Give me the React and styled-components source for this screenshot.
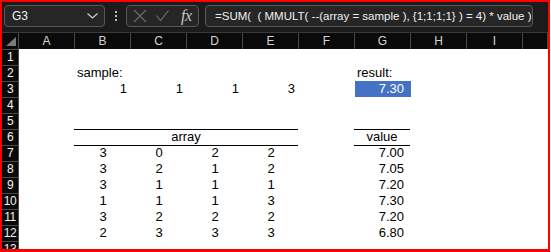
import React from "react";
import styled, { createGlobalStyle } from "styled-components";

const Global = createGlobalStyle`
  html, body { margin: 0; padding: 0; background: #fff; }
  body { font-family: "Liberation Sans", Arial, sans-serif; }
`;

const COLS = ["A", "B", "C", "D", "E", "F", "G", "H", "I", "J"];
const ROWS = 13;

const num = (v) => ({ v, a: "right" });
const mid = (v) => ({ v, a: "center" });
const val = (v) => ({ v, a: "right", pad: 7 });

const cells = {
  B2: { v: "sample:", a: "left" },
  G2: { v: "result:", a: "left" },
  B3: num("1"),
  C3: num("1"),
  D3: num("1"),
  E3: num("3"),
  G3: { v: "7.30", a: "right", pad: 7, fill: true },
  B6: { v: "array", a: "center", span: 4, rule: true },
  G6: { v: "value", a: "center", rule: true },
};

const table = [
  ["3", "0", "2", "2", "7.00"],
  ["3", "2", "1", "2", "7.05"],
  ["3", "1", "1", "1", "7.20"],
  ["1", "1", "1", "3", "7.30"],
  ["3", "2", "2", "2", "7.20"],
  ["2", "3", "3", "3", "6.80"],
];
table.forEach((r, i) => {
  const row = i + 7;
  ["B", "C", "D", "E"].forEach((c, j) => (cells[c + row] = mid(r[j])));
  cells["G" + row] = val(r[4]);
});

export default function App() {
  const body = [];
  for (let r = 1; r <= ROWS; r++) {
    body.push(<RowHead key={"h" + r}>{r}</RowHead>);
    let skip = 0;
    COLS.forEach((c, i) => {
      if (skip > 0) {
        skip--;
        return;
      }
      const cell = cells[c + r];
      const span = (cell && cell.span) || 1;
      skip = span - 1;
      body.push(
        <Cell
          key={c + r}
          $span={span}
          $align={cell ? cell.a : "left"}
          $pad={cell && cell.pad}
          $fill={cell && cell.fill}
          $rule={cell && cell.rule}
        >
          {cell ? cell.v : ""}
        </Cell>
      );
    });
  }

  return (
    <>
      <Global />
      <Frame>
        <TopBar>
          <NameBox>
            <span>G3</span>
            <svg width="11" height="6" viewBox="0 0 11 6">
              <polyline points="0.5,0.5 5.5,5 10.5,0.5" fill="none" stroke="#cfcfcf" strokeWidth="1.2" />
            </svg>
          </NameBox>
          <Dots>
            <i />
            <i />
            <i />
          </Dots>
          <FxBox>
            <svg width="14" height="14" viewBox="0 0 14 14">
              <path d="M1 1 L13 13 M13 1 L1 13" stroke="#6a6a6a" strokeWidth="1.2" />
            </svg>
            <svg width="13" height="12" viewBox="0 0 13 12">
              <polyline points="0.5,5.5 4.5,10.5 12.5,0.5" fill="none" stroke="#6a6a6a" strokeWidth="1.2" />
            </svg>
            <Fx>fx</Fx>
          </FxBox>
          <Formula>=SUM(&nbsp; ( MMULT( --(array = sample ), {"{1;1;1;1}"} ) = 4) * value )</Formula>
        </TopBar>
        <Sheet>
          <Corner>
            <svg width="10" height="9" viewBox="0 0 10 9">
              <polygon points="10,0 10,9 0,9" fill="#7a7a7a" />
            </svg>
          </Corner>
          {COLS.map((c) => (
            <ColHead key={c}>{c === "J" ? "" : c}</ColHead>
          ))}
          {body}
        </Sheet>
      </Frame>
    </>
  );
}

const Frame = styled.div`
  width: 550px;
  height: 252px;
  box-sizing: border-box;
  border: 2px solid #ff0000;
  border-bottom-width: 3px;
  overflow: hidden;
  display: flex;
  flex-direction: column;
  background: #fff;
`;

const TopBar = styled.div`
  height: 31px;
  flex: none;
  box-sizing: border-box;
  background: #1b1b1b;
  border-bottom: 1px solid #3a3a3a;
  display: flex;
  align-items: flex-start;
  padding: 3px 0 0 2px;
  gap: 0;
`;

const Box = styled.div`
  height: 22px;
  box-sizing: border-box;
  border: 1px solid #575757;
  border-radius: 4px;
  background: #262626;
  display: flex;
  align-items: center;
`;

const NameBox = styled(Box)`
  width: 101px;
  padding: 0 6px 0 7px;
  justify-content: space-between;
  color: #f2f2f2;
  font-size: 12px;
`;

const Dots = styled.div`
  width: 21px;
  height: 22px;
  display: flex;
  flex-direction: column;
  align-items: center;
  justify-content: center;
  gap: 2px;

  i {
    width: 2px;
    height: 2px;
    background: #bdbdbd;
  }
`;

const FxBox = styled(Box)`
  width: 73px;
  padding: 0 5px 0 6px;
  gap: 9px;
`;

const Fx = styled.span`
  font-family: "Liberation Serif", "Times New Roman", serif;
  font-style: italic;
  font-size: 16px;
  color: #c8c8c8;
  margin-left: 3px;
  letter-spacing: -0.5px;
`;

const Formula = styled(Box)`
  width: 328px;
  margin-left: 6px;
  padding-left: 9px;
  color: #f0f0f0;
  font-size: 11.5px;
  white-space: nowrap;
  overflow: hidden;
`;

const Sheet = styled.div`
  display: grid;
  grid-template-columns: 17px repeat(9, 56px) 1fr;
  grid-auto-rows: 16px;
  font-size: 13px;
  line-height: 16px;
`;

const Corner = styled.div`
  background: #0a0a0a;
  border-right: 1px solid #4a4a4a;
  display: flex;
  align-items: flex-end;
  justify-content: flex-end;
  padding: 0 2px 3px 0;
`;

const ColHead = styled.div`
  background: #0a0a0a;
  border-right: 1px solid #474747;
  color: #d4d4d4;
  font-size: 12px;
  text-align: center;
`;

const RowHead = styled.div`
  background: #0a0a0a;
  border-right: 1px solid #4a4a4a;
  border-top: 1px solid #4a4a4a;
  color: #f0f0f0;
  font-size: 12px;
  line-height: 15px;
  text-align: center;
  letter-spacing: -0.5px;
`;

const Cell = styled.div`
  grid-column: span ${(p) => p.$span};
  color: ${(p) => (p.$fill ? "#ffffff" : "#000000")};
  background: ${(p) => (p.$fill ? "#4472c4" : "transparent")};
  text-align: ${(p) => p.$align};
  padding: 0 ${(p) => (p.$align === "right" ? p.$pad || 4 : 0)}px 0
    ${(p) => (p.$align === "left" ? 2 : 0)}px;
  white-space: nowrap;
  ${(p) =>
    p.$rule &&
    `
    border-top: 1px solid #000;
    border-bottom: 1px solid #000;
    margin: 0 1px -1px -1px;
    line-height: 14px;
  `}
`;
